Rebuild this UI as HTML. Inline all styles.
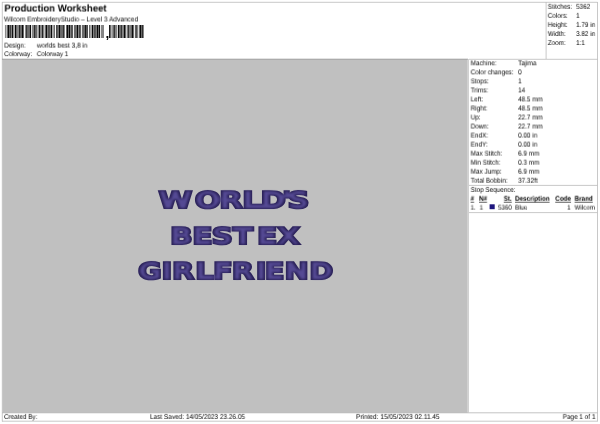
<!DOCTYPE html>
<html><head><meta charset="utf-8"><title>Production Worksheet</title>
<style>
html,body{margin:0;padding:0;background:#fff;}
body{width:600px;height:424px;overflow:hidden;}
#page{position:absolute;left:0;top:0;width:600px;height:424px;will-change:transform;}
svg{display:block;}
svg text{font-family:"Liberation Sans",Arial,sans-serif;text-rendering:geometricPrecision;will-change:transform;}
svg .emb text{font-family:"DejaVu Sans","Liberation Sans",sans-serif;will-change:auto;}
</style></head><body>
<div id="page">
<svg width="600" height="424" viewBox="0 0 600 424">
<g fill="#000">
<rect x="2.5" y="59.2" width="465.2" height="353.6" fill="#c0c0c0" stroke="none" />
<line x1="2" y1="2.3" x2="597.5" y2="2.3" stroke="#bababa" stroke-width="0.8"/>
<line x1="2.3" y1="2" x2="2.3" y2="421.5" stroke="#bababa" stroke-width="0.8"/>
<line x1="597.5" y1="2" x2="597.5" y2="421.5" stroke="#bababa" stroke-width="0.8"/>
<line x1="2" y1="421.2" x2="597.5" y2="421.2" stroke="#bababa" stroke-width="0.8"/>
<line x1="546.1" y1="2" x2="546.1" y2="59" stroke="#bababa" stroke-width="0.8"/>
<line x1="2" y1="59.2" x2="468" y2="59.2" stroke="#909090" stroke-width="0.8"/>
<line x1="469" y1="59.3" x2="597.8" y2="59.3" stroke="#bababa" stroke-width="0.8"/>
<line x1="468.3" y1="59" x2="468.3" y2="412.5" stroke="#c6c6c6" stroke-width="1.0"/>
<line x1="469" y1="185.4" x2="597.5" y2="185.4" stroke="#bababa" stroke-width="0.8"/>
<line x1="469" y1="212.6" x2="597.5" y2="212.6" stroke="#bababa" stroke-width="0.8"/>
<line x1="2" y1="412.8" x2="597.5" y2="412.8" stroke="#b4b4b4" stroke-width="0.8"/>
<text transform="translate(4.4,11.5) scale(0.9609,1)" font-size="9.99" font-weight="bold" fill="#000">Production Worksheet</text>
<text transform="translate(3.9,21.5) scale(0.9431,1)" font-size="6.94">Wilcom EmbroideryStudio – Level 3 Advanced</text>
<text transform="translate(4.2,47.6) scale(0.9211,1)" font-size="6.84">Design:</text>
<text transform="translate(36.8,47.6) scale(0.9525,1)" font-size="6.84">worlds best 3,8 in</text>
<text transform="translate(4.2,56.1) scale(0.9211,1)" font-size="6.84">Colorway:</text>
<text transform="translate(36.8,56.1) scale(0.9211,1)" font-size="6.84">Colorway 1</text>
<text transform="translate(547.8,8.8) scale(0.9214,1)" font-size="6.87">Stitches:</text>
<text transform="translate(576.1,8.8) scale(0.9214,1)" font-size="6.87">5362</text>
<text transform="translate(547.8,17.85) scale(0.9214,1)" font-size="6.87">Colors:</text>
<text transform="translate(576.1,17.85) scale(0.9214,1)" font-size="6.87">1</text>
<text transform="translate(547.8,26.9) scale(0.9214,1)" font-size="6.87">Height:</text>
<text transform="translate(576.1,26.9) scale(0.9214,1)" font-size="6.87">1.79 in</text>
<text transform="translate(547.8,35.95) scale(0.9214,1)" font-size="6.87">Width:</text>
<text transform="translate(576.1,35.95) scale(0.9214,1)" font-size="6.87">3.82 in</text>
<text transform="translate(547.8,45.0) scale(0.9214,1)" font-size="6.87">Zoom:</text>
<text transform="translate(576.1,45.0) scale(0.9214,1)" font-size="6.87">1:1</text>
<text transform="translate(470.7,65.3) scale(0.922,1)" font-size="6.92">Machine:</text>
<text transform="translate(518.1,65.3) scale(0.922,1)" font-size="6.92">Tajima</text>
<text transform="translate(470.7,74.33) scale(0.922,1)" font-size="6.92">Color changes:</text>
<text transform="translate(518.1,74.33) scale(0.922,1)" font-size="6.92">0</text>
<text transform="translate(470.7,83.36) scale(0.922,1)" font-size="6.92">Stops:</text>
<text transform="translate(518.1,83.36) scale(0.922,1)" font-size="6.92">1</text>
<text transform="translate(470.7,92.39) scale(0.922,1)" font-size="6.92">Trims:</text>
<text transform="translate(518.1,92.39) scale(0.922,1)" font-size="6.92">14</text>
<text transform="translate(470.7,101.42) scale(0.922,1)" font-size="6.92">Left:</text>
<text transform="translate(518.1,101.42) scale(0.922,1)" font-size="6.92">48.5 mm</text>
<text transform="translate(470.7,110.45) scale(0.922,1)" font-size="6.92">Right:</text>
<text transform="translate(518.1,110.45) scale(0.922,1)" font-size="6.92">48.5 mm</text>
<text transform="translate(470.7,119.48) scale(0.922,1)" font-size="6.92">Up:</text>
<text transform="translate(518.1,119.48) scale(0.922,1)" font-size="6.92">22.7 mm</text>
<text transform="translate(470.7,128.51) scale(0.922,1)" font-size="6.92">Down:</text>
<text transform="translate(518.1,128.51) scale(0.922,1)" font-size="6.92">22.7 mm</text>
<text transform="translate(470.7,137.54) scale(0.922,1)" font-size="6.92">EndX:</text>
<text transform="translate(518.1,137.54) scale(0.922,1)" font-size="6.92">0.00 in</text>
<text transform="translate(470.7,146.57) scale(0.922,1)" font-size="6.92">EndY:</text>
<text transform="translate(518.1,146.57) scale(0.922,1)" font-size="6.92">0.00 in</text>
<text transform="translate(470.7,155.6) scale(0.922,1)" font-size="6.92">Max Stitch:</text>
<text transform="translate(518.1,155.6) scale(0.922,1)" font-size="6.92">6.9 mm</text>
<text transform="translate(470.7,164.63) scale(0.922,1)" font-size="6.92">Min Stitch:</text>
<text transform="translate(518.1,164.63) scale(0.922,1)" font-size="6.92">0.3 mm</text>
<text transform="translate(470.7,173.66) scale(0.922,1)" font-size="6.92">Max Jump:</text>
<text transform="translate(518.1,173.66) scale(0.922,1)" font-size="6.92">6.9 mm</text>
<text transform="translate(470.7,182.69) scale(0.922,1)" font-size="6.92">Total Bobbin:</text>
<text transform="translate(518.1,182.69) scale(0.922,1)" font-size="6.92">37.32ft</text>
<text transform="translate(470.7,191.9) scale(0.9211,1)" font-size="6.84">Stop Sequence:</text>
<text transform="translate(470.6,200.7) scale(0.9211,1)" font-size="6.84" font-weight="bold" text-decoration="underline">#</text>
<text transform="translate(479,200.7) scale(0.9211,1)" font-size="6.84" font-weight="bold" text-decoration="underline">N#</text>
<text transform="translate(503.75,200.7) scale(0.9211,1)" font-size="6.84" font-weight="bold" text-decoration="underline">St.</text>
<text transform="translate(515,200.7) scale(0.9211,1)" font-size="6.84" font-weight="bold" text-decoration="underline">Description</text>
<text transform="translate(555.25,200.7) scale(0.9211,1)" font-size="6.84" font-weight="bold" text-decoration="underline">Code</text>
<text transform="translate(574.6,200.7) scale(0.9211,1)" font-size="6.84" font-weight="bold" text-decoration="underline">Brand</text>
<text transform="translate(470.6,209.6) scale(0.9212,1)" font-size="6.73">1.</text>
<text transform="translate(479.6,209.6) scale(0.9212,1)" font-size="6.73">1</text>
<rect x="489.6" y="204.3" width="5.1" height="4.9" fill="#1e167e" stroke="none" />
<text transform="translate(498.01,209.6) scale(0.9212,1)" font-size="6.73">5360</text>
<text transform="translate(515,209.6) scale(0.9212,1)" font-size="6.73">Blue</text>
<text transform="translate(567.15,209.6) scale(0.9212,1)" font-size="6.73">1</text>
<text transform="translate(574.6,209.6) scale(0.9212,1)" font-size="6.73">Wilcom</text>
<text transform="translate(4.0,418.9) scale(0.9211,1)" font-size="6.84">Created By:</text>
<text transform="translate(150,418.9) scale(0.9446,1)" font-size="6.84">Last Saved: 14/05/2023 23.26.05</text>
<text transform="translate(356,418.9) scale(0.9543,1)" font-size="6.84">Printed: 15/05/2023 02.11.45</text>
<text transform="translate(562.8,418.9) scale(0.9317,1)" font-size="6.84">Page 1 of 1</text>
<path fill="#0a0a0a" stroke="none" d="M4.97 24.9h0.50V38h-0.50zM6.74 24.9h0.50V38h-0.50zM7.62 24.9h1.39V38h-1.39zM9.39 24.9h1.39V38h-1.39zM11.16 24.9h0.50V38h-0.50zM12.04 24.9h1.39V38h-1.39zM14.70 24.9h1.39V38h-1.39zM16.47 24.9h0.50V38h-0.50zM17.35 24.9h0.50V38h-0.50zM18.23 24.9h0.50V38h-0.50zM19.12 24.9h1.39V38h-1.39zM20.89 24.9h0.50V38h-0.50zM21.77 24.9h1.39V38h-1.39zM23.54 24.9h0.50V38h-0.50zM25.31 24.9h0.50V38h-0.50zM26.19 24.9h1.39V38h-1.39zM27.96 24.9h0.50V38h-0.50zM28.85 24.9h0.50V38h-0.50zM29.73 24.9h1.39V38h-1.39zM32.38 24.9h0.50V38h-0.50zM33.27 24.9h0.50V38h-0.50zM34.15 24.9h1.39V38h-1.39zM35.92 24.9h0.50V38h-0.50zM36.80 24.9h0.50V38h-0.50zM38.57 24.9h1.39V38h-1.39zM40.34 24.9h0.50V38h-0.50zM41.23 24.9h0.50V38h-0.50zM42.11 24.9h1.39V38h-1.39zM44.76 24.9h0.50V38h-0.50zM45.65 24.9h1.39V38h-1.39zM47.42 24.9h0.50V38h-0.50zM48.30 24.9h1.39V38h-1.39zM50.07 24.9h0.50V38h-0.50zM50.95 24.9h1.39V38h-1.39zM53.61 24.9h0.50V38h-0.50zM54.49 24.9h0.50V38h-0.50zM56.26 24.9h1.39V38h-1.39zM58.03 24.9h0.50V38h-0.50zM58.91 24.9h1.39V38h-1.39zM60.68 24.9h0.50V38h-0.50zM61.57 24.9h0.50V38h-0.50zM62.45 24.9h1.39V38h-1.39zM64.22 24.9h0.50V38h-0.50zM65.99 24.9h0.50V38h-0.50zM66.87 24.9h1.39V38h-1.39zM68.64 24.9h1.39V38h-1.39zM70.41 24.9h0.50V38h-0.50zM71.29 24.9h1.39V38h-1.39zM73.95 24.9h0.50V38h-0.50zM74.83 24.9h0.50V38h-0.50zM75.71 24.9h0.50V38h-0.50zM76.60 24.9h1.39V38h-1.39zM78.37 24.9h0.50V38h-0.50zM79.25 24.9h1.39V38h-1.39zM81.90 24.9h0.50V38h-0.50zM82.79 24.9h0.50V38h-0.50zM83.67 24.9h0.50V38h-0.50zM84.56 24.9h1.39V38h-1.39zM86.33 24.9h1.39V38h-1.39zM88.98 24.9h0.50V38h-0.50zM89.86 24.9h0.50V38h-0.50zM91.63 24.9h1.39V38h-1.39zM93.40 24.9h0.50V38h-0.50zM94.28 24.9h1.39V38h-1.39zM96.05 24.9h0.50V38h-0.50zM96.94 24.9h1.39V38h-1.39zM98.71 24.9h1.39V38h-1.39zM101.36 24.9h0.50V38h-0.50zM102.24 24.9h0.50V38h-0.50zM103.13 24.9h0.50V38h-0.50z"/>
<path fill="#0a0a0a" stroke="none" d="M109.07 24.9h1.37V38h-1.37zM110.82 24.9h0.50V38h-0.50zM112.57 24.9h0.50V38h-0.50zM113.45 24.9h1.37V38h-1.37zM115.20 24.9h0.50V38h-0.50zM116.08 24.9h0.50V38h-0.50zM117.83 24.9h1.37V38h-1.37zM119.58 24.9h0.50V38h-0.50zM120.46 24.9h1.37V38h-1.37zM122.21 24.9h0.50V38h-0.50zM123.09 24.9h0.50V38h-0.50zM123.96 24.9h1.37V38h-1.37zM125.71 24.9h0.50V38h-0.50zM127.46 24.9h1.37V38h-1.37zM129.22 24.9h0.50V38h-0.50zM130.09 24.9h0.50V38h-0.50zM130.97 24.9h0.50V38h-0.50zM131.84 24.9h1.37V38h-1.37zM133.60 24.9h0.50V38h-0.50zM135.35 24.9h1.37V38h-1.37zM137.10 24.9h0.50V38h-0.50zM138.85 24.9h0.50V38h-0.50zM139.73 24.9h1.37V38h-1.37zM141.48 24.9h1.37V38h-1.37zM143.23 24.9h0.50V38h-0.50z"/>
<text transform="translate(105.5,38.0) scale(1.0,1)" font-size="13.5" font-weight="bold">,</text>
</g>
<defs><filter id="satin" filterUnits="userSpaceOnUse" x="120" y="180" width="230" height="110" color-interpolation-filters="sRGB">
<feMorphology in="SourceAlpha" operator="erode" radius="2 1" result="er"/>
<feGaussianBlur in="er" stdDeviation="1.1" result="erb"/>
<feFlood flood-color="#554a94" result="fl"/>
<feComposite in="fl" in2="erb" operator="in" result="hi"/>
<feMerge><feMergeNode in="SourceGraphic"/><feMergeNode in="hi"/></feMerge>
</filter></defs>
<g filter="url(#satin)"><g class="emb" font-weight="bold" font-size="23.0" fill="#2a2158" stroke="#2a2158" stroke-width="2.0" stroke-linejoin="miter">
<text transform="scale(1.33,1)" x="119.14 146.36 164.87 182.19 195.79 212.04 216.17" y="208.20">WORLD'S</text>
<text transform="scale(1.3,1)" x="130.83 147.97 162.66 179.08 189.08 197.7 212.99" y="243.80">BEST EX</text>
<text transform="scale(1.26,1)" x="109.49 128.15 136.59 154.95 169.08 184.01 202.99 210.18 225.85 245.44" y="279.20">GIRLFRIEND</text>
</g></g>
</svg>
</div>
</body></html>
